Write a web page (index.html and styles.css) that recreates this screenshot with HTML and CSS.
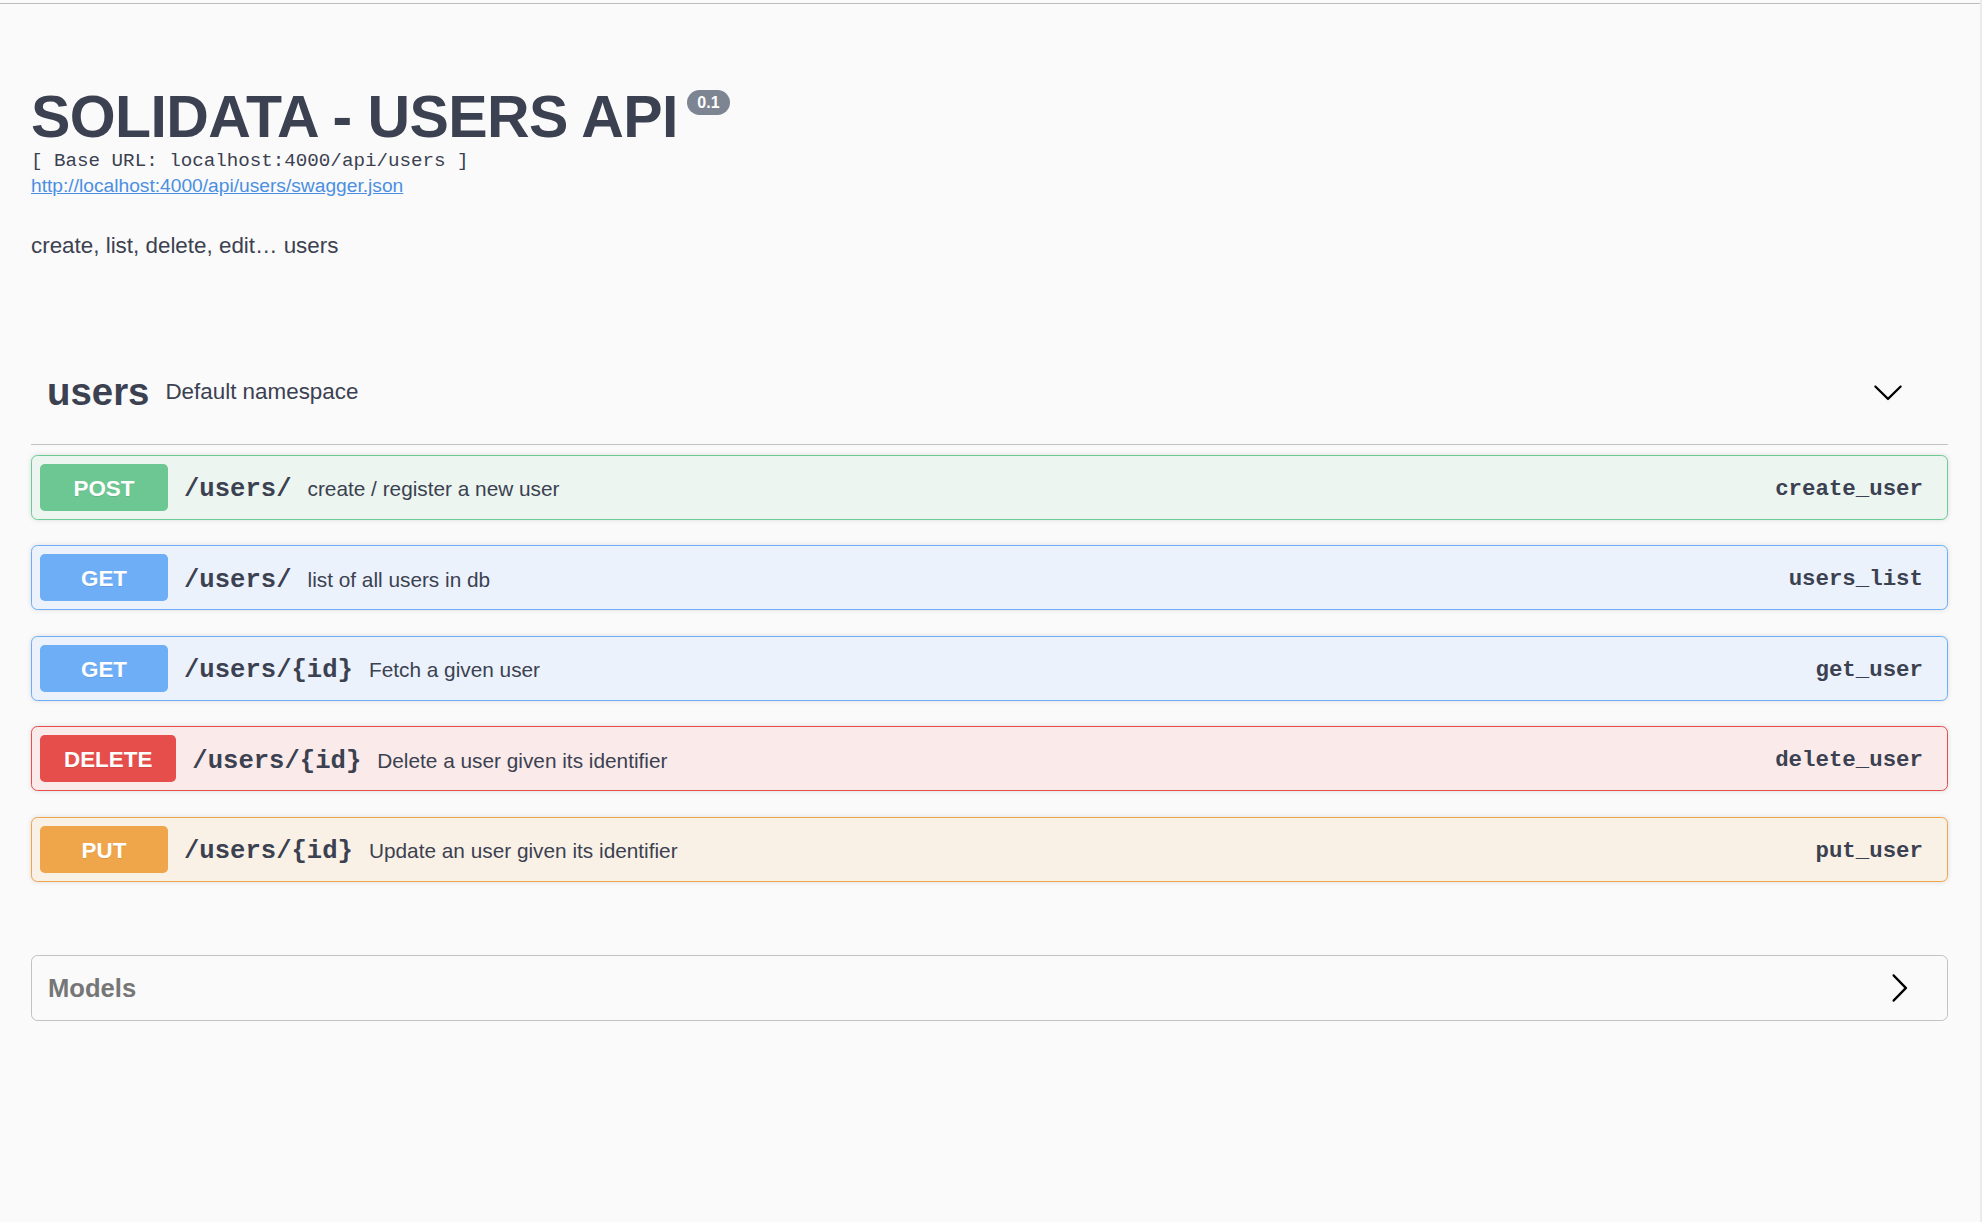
FILE: index.html
```html
<!DOCTYPE html>
<html lang="en">
<head>
<meta charset="utf-8">
<title>SOLIDATA - USERS API</title>
<link rel="stylesheet" href="styles.css">
</head>
<body>
<div class="topline"></div>
<div class="wrapper">
  <div class="info">
    <div class="title-row">
      <h2 class="title">SOLIDATA - USERS API</h2>
      <span class="version">0.1</span>
    </div>
    <pre class="base-url">[ Base URL: localhost:4000/api/users ]</pre>
    <div class="link-row"><a class="spec-link" href="#">http://localhost:4000/api/users/swagger.json</a></div>
    <p class="desc">create, list, delete, edit… users</p>
  </div>

  <div class="tag">
    <h4 class="tag-name">users</h4>
    <small class="tag-desc">Default namespace</small>
    <svg class="arrow" width="32" height="32" viewBox="0 0 20 20"><path d="M17.418 6.109c.272-.268.709-.268.979 0s.266.701 0 .969l-7.908 7.83c-.27.268-.707.268-.979 0l-7.908-7.830c-.27-.268-.27-.701 0-.969.271-.268.709-.268.979 0L10 13.25l7.418-7.141z"/></svg>
  </div>

  <div class="ops">
    <div class="op op-post">
      <span class="method">POST</span>
      <span class="path">/users/</span>
      <span class="summary">create / register a new user</span>
      <span class="opid">create_user</span>
    </div>
    <div class="op op-get">
      <span class="method">GET</span>
      <span class="path">/users/</span>
      <span class="summary">list of all users in db</span>
      <span class="opid">users_list</span>
    </div>
    <div class="op op-get">
      <span class="method">GET</span>
      <span class="path">/users/{id}</span>
      <span class="summary">Fetch a given user</span>
      <span class="opid">get_user</span>
    </div>
    <div class="op op-delete">
      <span class="method">DELETE</span>
      <span class="path">/users/{id}</span>
      <span class="summary">Delete a user given its identifier</span>
      <span class="opid">delete_user</span>
    </div>
    <div class="op op-put">
      <span class="method">PUT</span>
      <span class="path">/users/{id}</span>
      <span class="summary">Update an user given its identifier</span>
      <span class="opid">put_user</span>
    </div>
  </div>

  <section class="models">
    <h4 class="models-head">
      <span class="models-title">Models</span>
      <svg class="arrow" width="32" height="32" viewBox="0 0 20 20"><path d="M13.25 10L6.109 2.58c-.268-.27-.268-.707 0-.979.268-.27.701-.27.969 0l7.83 7.908c.268.271.268.709 0 .979l-7.83 7.908c-.268.271-.701.27-.969 0-.268-.269-.268-.707 0-.979L13.25 10z"/></svg>
    </h4>
  </section>
</div>
</body>
</html>
```

FILE: styles.css
```css
* { box-sizing: border-box; }

html, body {
  margin: 0;
  padding: 0;
}

body {
  background: #fafafa;
  color: #3b4151;
  font-family: "Liberation Sans", Arial, sans-serif;
  min-height: 100vh;
  border-right: 2px solid #ebebeb;
}

.topline {
  height: 4px;
  border-bottom: 1px solid #bdbdbd;
}

.wrapper {
  padding: 0 32px 0 31px;
}

/* info */
.info {
  margin: 80px 0 0;
  padding-bottom: 78px;
}

.title-row {
  display: flex;
  align-items: flex-start;
}

.title {
  margin: 0;
  font-size: 59px;
  line-height: 66px;
  font-weight: 700;
  letter-spacing: -0.6px;
  color: #3b4151;
}

.version {
  margin: 6px 0 0 9px;
  padding: 3px 10.5px;
  font-size: 16px;
  line-height: 19px;
  font-weight: 700;
  color: #fff;
  background: #7d8492;
  border-radius: 57px;
}

.base-url {
  margin: 0;
  font-family: "Liberation Mono", "Courier New", monospace;
  font-size: 19.2px;
  line-height: 22px;
  color: #3b4151;
}

.link-row {
  margin-top: 3px;
  font-size: 19.2px;
  line-height: 22px;
}

.spec-link {
  color: #4a8fe2;
  text-decoration: underline;
}

.desc {
  margin: 32px 0 0;
  font-size: 22.4px;
  line-height: 33.6px;
  color: #3b4151;
}

/* tag */
.tag {
  display: flex;
  align-items: center;
  padding: 29px 44px 30px 16px;
  border-bottom: 1px solid rgba(59, 65, 81, 0.3);
  margin-bottom: 10px;
}

.tag-name {
  margin: 0;
  font-size: 38.4px;
  line-height: 44px;
  font-weight: 700;
  color: #3b4151;
}

.tag-desc {
  flex: 1;
  padding: 0 16px;
  font-size: 22.4px;
  line-height: 26px;
  color: #3b4151;
}

.arrow {
  display: block;
  flex: none;
  fill: #000;
}

/* operations */
.ops {
  display: flex;
  flex-direction: column;
  gap: 25.5px;
}

.op {
  display: flex;
  align-items: center;
  padding: 8px;
  border: 1px solid;
  border-radius: 6.4px;
  box-shadow: 0 0 5px rgba(0, 0, 0, 0.12);
}

.method {
  min-width: 128px;
  padding: 2px 24px 0;
  line-height: 45px;
  font-size: 22.4px;
  font-weight: 700;
  color: #fff;
  text-align: center;
  border-radius: 4.8px;
  text-shadow: 0 1px 0 rgba(0, 0, 0, 0.1);
}

.path {
  padding: 5px 16px 0;
  font-family: "Liberation Mono", "Courier New", monospace;
  font-size: 25.6px;
  font-weight: 700;
  color: #3b4151;
}

.summary {
  flex: 1;
  padding-top: 4px;
  font-size: 20.8px;
  color: #3b4151;
}

.opid {
  padding: 3px 16px 0;
  font-family: "Liberation Mono", "Courier New", monospace;
  font-size: 22.4px;
  font-weight: 700;
  color: #3b4151;
}

.op-post { border-color: #6ccb95; background: #ecf5f0; }
.op-post .method { background: #6cc793; }

.op-get { border-color: #6eaef6; background: #ebf2fb; }
.op-get .method { background: #6eaef6; }

.op-delete { border-color: #e64e4b; background: #faeaea; }
.op-delete .method { background: #e64e4b; }

.op-put { border-color: #efa54a; background: #faf1e6; }
.op-put .method { background: #efa54a; }

/* models */
.models {
  margin-top: 73px;
  border: 1px solid rgba(59, 65, 81, 0.3);
  border-radius: 6.4px;
}

.models-head {
  display: flex;
  align-items: center;
  margin: 0;
  padding: 16px 32px 16px 16px;
}

.models-title {
  flex: 1;
  font-size: 25.6px;
  line-height: 32px;
  font-weight: 700;
  color: #767676;
}
```
